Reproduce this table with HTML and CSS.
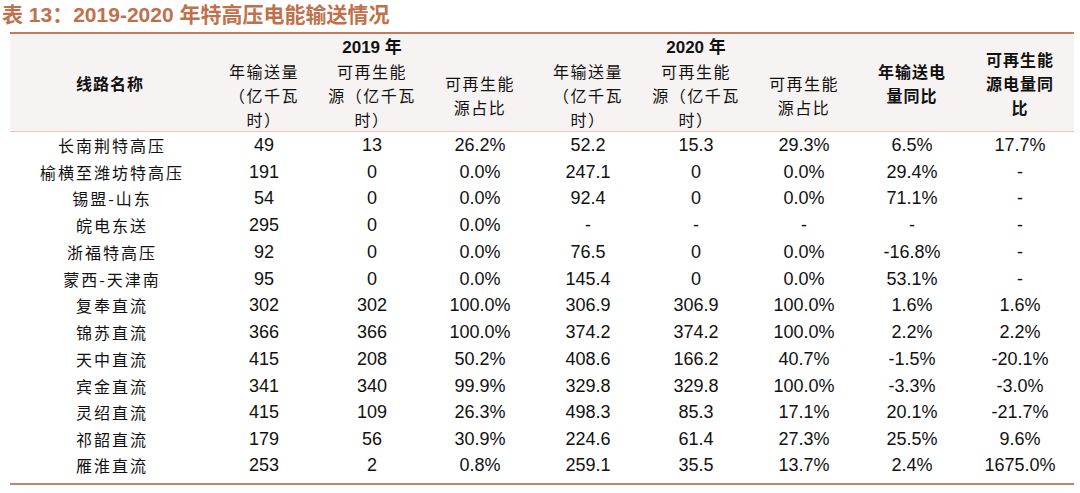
FILE: index.html
```html
<!DOCTYPE html>
<html lang="zh">
<head>
<meta charset="utf-8">
<title>表 13</title>
<link rel="stylesheet" href="styles.css">
</head>
<body>
<div class="page">
  <h1 class="title">表 13：2019-2020 年特高压电能输送情况</h1>
  <table class="data">
    <colgroup>
      <col class="c-name">
      <col class="c-num"><col class="c-num"><col class="c-num">
      <col class="c-num"><col class="c-num"><col class="c-num">
      <col class="c-num"><col class="c-num">
    </colgroup>
    <thead>
      <tr class="h1">
        <th rowspan="2" class="bold">线路名称</th>
        <th colspan="3" class="year">2019 年</th>
        <th colspan="3" class="year">2020 年</th>
        <th rowspan="2" class="bold">年输送电<br>量同比</th>
        <th rowspan="2" class="bold">可再生能<br>源电量同<br>比</th>
      </tr>
      <tr class="h2">
        <th>年输送量<br>（亿千瓦<br>时）</th>
        <th>可再生能<br>源（亿千瓦<br>时）</th>
        <th>可再生能<br>源占比</th>
        <th>年输送量<br>（亿千瓦<br>时）</th>
        <th>可再生能<br>源（亿千瓦<br>时）</th>
        <th>可再生能<br>源占比</th>
      </tr>
    </thead>
    <tbody>
      <tr><td class="name">长南荆特高压</td><td>49</td><td>13</td><td>26.2%</td><td>52.2</td><td>15.3</td><td>29.3%</td><td>6.5%</td><td>17.7%</td></tr>
      <tr><td class="name">榆横至潍坊特高压</td><td>191</td><td>0</td><td>0.0%</td><td>247.1</td><td>0</td><td>0.0%</td><td>29.4%</td><td>-</td></tr>
      <tr><td class="name">锡盟-山东</td><td>54</td><td>0</td><td>0.0%</td><td>92.4</td><td>0</td><td>0.0%</td><td>71.1%</td><td>-</td></tr>
      <tr><td class="name">皖电东送</td><td>295</td><td>0</td><td>0.0%</td><td>-</td><td>-</td><td>-</td><td>-</td><td>-</td></tr>
      <tr><td class="name">浙福特高压</td><td>92</td><td>0</td><td>0.0%</td><td>76.5</td><td>0</td><td>0.0%</td><td>-16.8%</td><td>-</td></tr>
      <tr><td class="name">蒙西-天津南</td><td>95</td><td>0</td><td>0.0%</td><td>145.4</td><td>0</td><td>0.0%</td><td>53.1%</td><td>-</td></tr>
      <tr><td class="name">复奉直流</td><td>302</td><td>302</td><td>100.0%</td><td>306.9</td><td>306.9</td><td>100.0%</td><td>1.6%</td><td>1.6%</td></tr>
      <tr><td class="name">锦苏直流</td><td>366</td><td>366</td><td>100.0%</td><td>374.2</td><td>374.2</td><td>100.0%</td><td>2.2%</td><td>2.2%</td></tr>
      <tr><td class="name">天中直流</td><td>415</td><td>208</td><td>50.2%</td><td>408.6</td><td>166.2</td><td>40.7%</td><td>-1.5%</td><td>-20.1%</td></tr>
      <tr><td class="name">宾金直流</td><td>341</td><td>340</td><td>99.9%</td><td>329.8</td><td>329.8</td><td>100.0%</td><td>-3.3%</td><td>-3.0%</td></tr>
      <tr><td class="name">灵绍直流</td><td>415</td><td>109</td><td>26.3%</td><td>498.3</td><td>85.3</td><td>17.1%</td><td>20.1%</td><td>-21.7%</td></tr>
      <tr><td class="name">祁韶直流</td><td>179</td><td>56</td><td>30.9%</td><td>224.6</td><td>61.4</td><td>27.3%</td><td>25.5%</td><td>9.6%</td></tr>
      <tr class="last"><td class="name">雁淮直流</td><td>253</td><td>2</td><td>0.8%</td><td>259.1</td><td>35.5</td><td>13.7%</td><td>2.4%</td><td>1675.0%</td></tr>
    </tbody>
  </table>
</div>
</body>
</html>
```

FILE: styles.css
```css
html, body {
  margin: 0;
  padding: 0;
  background: #ffffff;
}

.page {
  position: relative;
  width: 1080px;
  height: 493px;
  overflow: hidden;
}

.title {
  margin: 0;
  padding: 0 0 0 2px;
  height: 32px;
  line-height: 32px;
  font-family: "Liberation Sans", "Noto Sans CJK SC", sans-serif;
  font-size: 21px;
  font-weight: 700;
  color: #c0714b;
  white-space: nowrap;
  position: relative;
  top: -1px;
}

.data {
  margin-left: 10px;
  width: 1064px;
  border-collapse: collapse;
  table-layout: fixed;
  font-family: "Liberation Sans", "Noto Sans CJK SC", sans-serif;
  color: #111111;
  border-top: 2px solid #c27a5d;
  border-bottom: 2px solid #c8846a;
}

.c-name { width: 200px; }
.c-num { width: 108px; }

.data thead {
  background: #f7f3f2;
  border-bottom: 1px solid #e6c6ba;
}

.data th {
  padding: 0;
  font-weight: 400;
  font-size: 16px;
  line-height: 24px;
  letter-spacing: 1.5px;
  text-align: center;
  vertical-align: middle;
  font-family: "Noto Sans CJK SC", sans-serif;
}

.h1 { height: 26px; }
.h2 { height: 72px; }

.data th.bold {
  font-weight: 700;
  letter-spacing: 1px;
}

.data th.year {
  font-family: "Liberation Sans", "Noto Sans CJK SC", sans-serif;
  font-weight: 700;
  font-size: 17px;
  letter-spacing: 0;
  vertical-align: bottom;
  line-height: 22px;
}

.data tbody tr {
  height: 26.75px;
}

.data tbody tr.last {
  height: 31px;
}

.data td {
  padding: 0;
  text-align: center;
  vertical-align: middle;
  font-size: 18px;
  line-height: 20px;
  white-space: nowrap;
}

.data td.name {
  font-family: "Noto Sans CJK SC", sans-serif;
  font-size: 16px;
  letter-spacing: 2px;
  padding-left: 4px;
}

.data tr.last td {
  padding-bottom: 6px;
}
```
